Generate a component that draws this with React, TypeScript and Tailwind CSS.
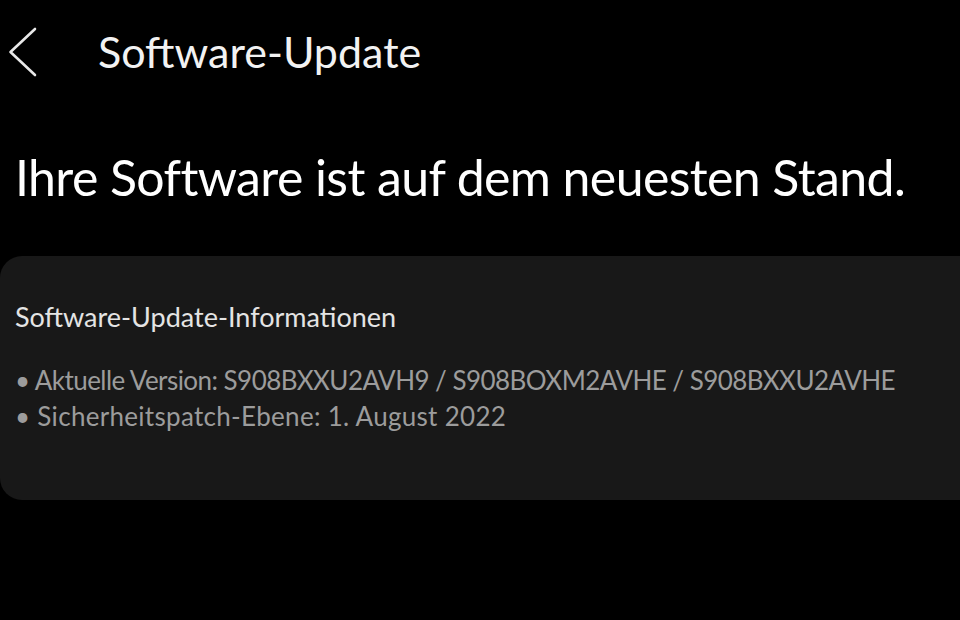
import React from 'react';

const App: React.FC = () => {
  return (
    <div className="w-[960px] h-[620px] bg-black overflow-hidden text-white" style={{ fontFamily: 'Lato, "Noto Sans", sans-serif' }}>
      {/* Header */}
      <div className="flex items-center h-[43px] mt-[30px]">
        <button className="w-[98px] h-[43px] flex items-center pl-[8px]">
          <svg width="30" height="50" viewBox="0 0 30 50" fill="none">
            <path d="M27 2 L2.5 25 L27 48" stroke="#e8e8e8" strokeWidth="2.6" strokeLinecap="round" strokeLinejoin="round" />
          </svg>
        </button>
        <h1 className="text-[43px] leading-none text-[#f2f2f2]">Software-Update</h1>
      </div>

      {/* Status */}
      <p className="pl-[15px] mt-[79px] text-[50px] leading-none tracking-[-0.6px] text-white">
        Ihre Software ist auf dem neuesten Stand.
      </p>

      {/* Info card */}
      <div className="mt-[54px] mr-[-24px] h-[244px] rounded-[22px] bg-[#181818] px-[15px] pt-[47px]">
        <h2 className="text-[27px] leading-none text-[#e4e4e4]">Software-Update-Informationen</h2>
        <ul className="mt-[32px] text-[26px] leading-[36px] text-[#9c9c9c]">
          <li className="tracking-[-0.55px]">• Aktuelle Version: S908BXXU2AVH9 / S908BOXM2AVHE / S908BXXU2AVHE</li>
          <li className="tracking-[0.3px]">• Sicherheitspatch-Ebene: 1. August 2022</li>
        </ul>
      </div>
    </div>
  );
};

export default App;
